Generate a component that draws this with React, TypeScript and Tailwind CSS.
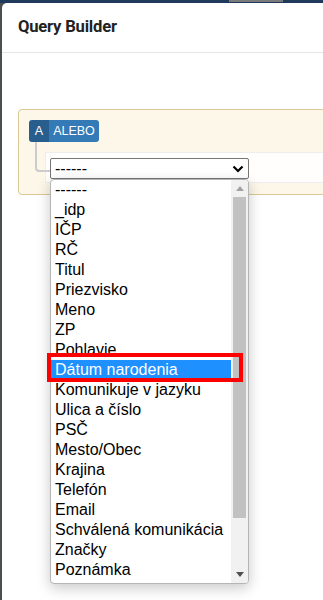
import React from "react";

const items = [
  "------",
  "_idp",
  "IČP",
  "RČ",
  "Titul",
  "Priezvisko",
  "Meno",
  "ZP",
  "Pohlavie",
  "Dátum narodenia",
  "Komunikuje v jazyku",
  "Ulica a číslo",
  "PSČ",
  "Mesto/Obec",
  "Krajina",
  "Telefón",
  "Email",
  "Schválená komunikácia",
  "Značky",
  "Poznámka",
];

export default function App() {
  return (
    <div className="w-[323px] h-[600px] overflow-hidden bg-[#4a4f52] flex flex-col">
      <div className="h-[3px] bg-[#1f3a5a] flex shrink-0">
        <div className="w-[229px]" />
        <div className="w-[54px] h-[2px] bg-[#7a7a7a]" />
      </div>
      <div className="flex flex-1">
        <div className="w-[2px] shrink-0" />
        <div className="flex-1 bg-white rounded-tl-[5px] min-w-[400px] flex flex-col">
          <div className="h-[50px] border-b border-[#e5e5e5] pl-[16px] flex items-center shrink-0">
            <span
              className="text-[16.6px] font-bold text-[#222] tracking-[-0.2px]"
              style={{ fontFamily: "Roboto, 'Noto Sans', sans-serif" }}
            >
              Query Builder
            </span>
          </div>
          <div className="pt-[56px] pl-[16px] flex-1">
            <div
              className="border border-[#dcc896] bg-[#fcf7e8] rounded-[4px] p-[10px] pb-[11px]"
              style={{ fontFamily: "'Liberation Sans', Arial, sans-serif" }}
            >
              <div className="flex h-[22px]">
                <div className="w-[20px] bg-[#285e8e] rounded-l-[3px] text-white text-[12.5px] flex items-center justify-center">
                  A
                </div>
                <div className="w-[50px] bg-[#337ab7] rounded-r-[3px] text-white text-[12.5px] flex items-center justify-center">
                  ALEBO
                </div>
              </div>
              <div className="pl-[16px] mt-[10px]">
                <div className="relative h-[31px] border border-[#eee] bg-white/90 pl-[4px] pt-[5px]">
                  <div className="absolute left-[-11px] top-[-11px] w-[15px] h-[30px] border-l-2 border-b-2 border-[#ccc] rounded-bl-[4px]" />
                  <div className="relative w-[199px] h-[21px] border border-[#767676] rounded-[2px] bg-white flex items-center pl-[4px] text-[16px] text-black">
                    <span className="leading-none">------</span>
                    <svg
                      className="absolute right-[4px] top-[6px]"
                      width="12"
                      height="8"
                      viewBox="0 0 12 8"
                    >
                      <path d="M1.5 1.5 L6 6 L10.5 1.5" fill="none" stroke="#000" strokeWidth="2.2" />
                    </svg>
                    <div className="absolute left-[-1px] top-[20px] w-[199px] h-[405px] bg-white border border-[#b5b5b5] rounded-[4px] shadow-[0_4px_14px_rgba(0,0,0,0.22)] flex z-10">
                      <div className="flex-1 flex flex-col">
                        {items.map((it, i) => (
                          <div
                            key={it}
                            className={
                              i === 9
                                ? "h-[20px] leading-[20px] pl-[4px] text-[16px] bg-[#1e90ff] text-white whitespace-nowrap"
                                : "h-[20px] leading-[20px] pl-[4px] text-[16px] text-black whitespace-nowrap"
                            }
                          >
                            {it}
                          </div>
                        ))}
                      </div>
                      <div className="w-[17px] bg-[#f1f1f1] rounded-r-[3px] flex flex-col items-center">
                        <div className="h-[17px] flex items-center justify-center">
                          <svg width="8" height="5" viewBox="0 0 8 5">
                            <path d="M0 5 L4 0 L8 5 Z" fill="#a3a3a3" />
                          </svg>
                        </div>
                        <div className="w-[13px] h-[321px] bg-[#c1c1c1]" />
                        <div className="flex-1" />
                        <div className="h-[17px] flex items-center justify-center">
                          <svg width="8" height="5" viewBox="0 0 8 5">
                            <path d="M0 0 L8 0 L4 5 Z" fill="#505050" />
                          </svg>
                        </div>
                      </div>
                      <div className="absolute left-[-4px] top-[173px] w-[196px] h-[29px] border-4 border-[#ff0000]" />
                    </div>
                  </div>
                </div>
              </div>
            </div>
          </div>
        </div>
      </div>
    </div>
  );
}
